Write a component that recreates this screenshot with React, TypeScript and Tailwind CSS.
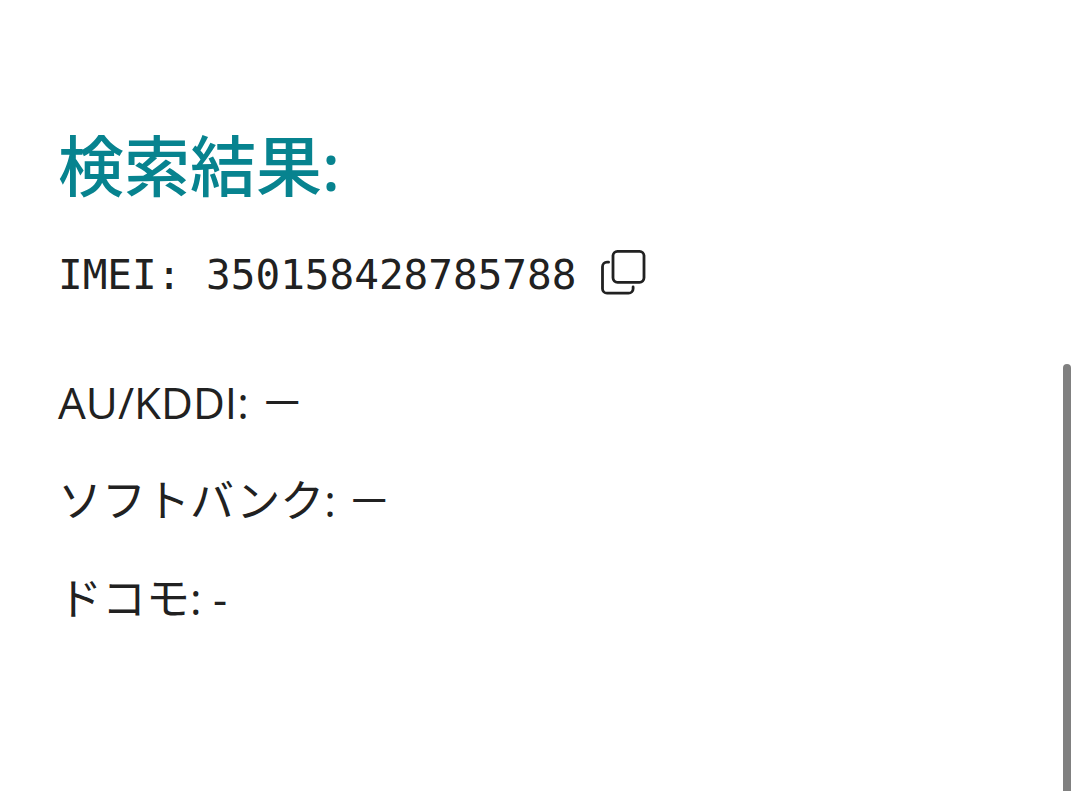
import { useState } from "react";

interface CarrierStatus {
  carrier: string;
  status: string;
}

const IMEI = "350158428785788";

const carriers: CarrierStatus[] = [
  { carrier: "AU/KDDI", status: "－" },
  { carrier: "ソフトバンク", status: "－" },
  { carrier: "ドコモ", status: "-" },
];

function CopyIcon() {
  return (
    <svg
      viewBox="0 0 46 46"
      className="h-[46px] w-[46px]"
      fill="none"
      stroke="currentColor"
      strokeWidth="2.8"
      strokeLinecap="round"
      aria-hidden="true"
    >
      <rect x="13" y="2.3" width="31" height="31" rx="4.5" />
      <path d="M8.6 13.2H7a4.5 4.5 0 0 0-4.5 4.5v22a4.5 4.5 0 0 0 4.5 4.5h21.6a4.5 4.5 0 0 0 4.5-4.5v-1.7" />
    </svg>
  );
}

export default function App() {
  const [copied, setCopied] = useState(false);

  const handleCopy = async () => {
    await navigator.clipboard.writeText(IMEI);
    setCopied(true);
  };

  return (
    <div className="flex h-screen justify-between overflow-hidden bg-white font-['Open_Sans','Noto_Sans_CJK_JP',sans-serif] text-[#212121]">
      <main className="flex-1 px-[58px] pt-[115px]">
        <h1 className="font-['Noto_Sans','Noto_Sans_CJK_JP',sans-serif] text-[66px] leading-[100px] font-medium text-[#07838f]">
          検索結果:
        </h1>

        <div className="mt-6 flex items-center gap-6">
          <p className="pt-1.5 font-['DejaVu_Sans_Mono',monospace] text-[41px] leading-[60px]">
            IMEI: {IMEI}
          </p>
          <button
            type="button"
            onClick={handleCopy}
            aria-label={copied ? "コピーしました" : "IMEIをコピー"}
            className="cursor-pointer"
          >
            <CopyIcon />
          </button>
        </div>

        <div className="mt-16 space-y-8 text-[44px] leading-[66px]">
          {carriers.map((item) => (
            <p key={item.carrier}>
              {item.carrier}: {item.status}
            </p>
          ))}
        </div>
      </main>

      {/* Scroll indicator */}
      <div className="flex w-[17px] flex-col justify-end">
        <div className="h-[54%] w-2 rounded-t-full bg-[#808080]" />
      </div>
    </div>
  );
}
